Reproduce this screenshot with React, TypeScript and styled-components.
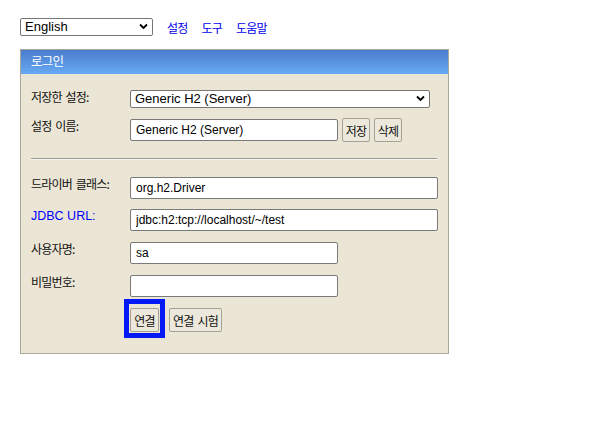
import React from "react";
import styled, { createGlobalStyle } from "styled-components";

const Global = createGlobalStyle`
  html, body { margin: 0; padding: 0; background: #fff; }
  body {
    font-family: "Liberation Sans", Arial, "Noto Sans CJK KR", sans-serif;
    font-size: 12px;
    color: #000;
  }
`;

const Page = styled.div`
  padding: 18px 0 0 20px;
  width: 595px;
`;

const TopBar = styled.div`
  display: flex;
  align-items: center;
  height: 18px;
  gap: 14px;
`;

const SelectWrap = styled.div<{ $w: number }>`
  position: relative;
  width: ${(p) => p.$w}px;
  height: 18px;
`;

const NativeSelect = styled.select`
  appearance: none;
  -webkit-appearance: none;
  box-sizing: border-box;
  width: 100%;
  height: 18px;
  margin: 0;
  padding: 0 20px 0 4px;
  border: 1px solid #767676;
  border-radius: 2px;
  background: #fff;
  font-family: "Liberation Sans", Arial, sans-serif;
  font-size: 13px;
  line-height: 16px;
  color: #000;
  outline: none;
`;

const Chevron = styled.svg`
  position: absolute;
  right: 5px;
  top: 5px;
  width: 9px;
  height: 7px;
  pointer-events: none;
`;

const TopLink = styled.a`
  color: #0000ee;
  text-decoration: none;
  font-family: "Noto Sans CJK KR", sans-serif;
  font-size: 12px;
  letter-spacing: -0.8px;
  line-height: 18px;
  margin-top: 2px;
`;

const Panel = styled.div`
  margin-top: 13px;
  width: 429px;
  box-sizing: border-box;
  border: 1px solid #aca899;
  background: #ebe5d5;
`;

const Header = styled.div`
  height: 24px;
  background: linear-gradient(#4a7ccd, #67aaf3);
  color: #fff;
  font-family: "Noto Sans CJK KR", sans-serif;
  font-size: 12.5px;
  letter-spacing: -0.8px;
  line-height: 22px;
  padding-left: 10px;
`;

const Body = styled.div`
  padding: 16px 0 21px 10px;
  display: flex;
  flex-direction: column;
`;

const Row = styled.div<{ $mt: number; $h: number }>`
  display: flex;
  align-items: flex-start;
  margin-top: ${(p) => p.$mt}px;
  height: ${(p) => p.$h}px;
`;

const Label = styled.div<{ $link?: boolean; $dy?: number }>`
  width: 99px;
  flex: none;
  line-height: 14px;
  margin-top: ${(p) => p.$dy ?? 0}px;
  font-family: ${(p) =>
    p.$link
      ? `"Liberation Sans", Arial, sans-serif`
      : `"Noto Sans CJK KR", sans-serif`};
  font-size: ${(p) => (p.$link ? "12.5px" : "12px")};
  letter-spacing: ${(p) => (p.$link ? "0" : "-0.8px")};
  word-spacing: ${(p) => (p.$link ? "0" : "2px")};
  color: ${(p) => (p.$link ? "#0000ff" : "#111")};
`;

const Controls = styled.div`
  display: flex;
  align-items: center;
  gap: 4px;
  height: 100%;
`;

const TextInput = styled.input<{ $w: number }>`
  box-sizing: border-box;
  width: ${(p) => p.$w}px;
  height: 22px;
  margin: 0;
  padding: 0 5px;
  border: 1px solid #7a7a7a;
  border-radius: 2px;
  background: #fff;
  font-family: "Liberation Sans", Arial, sans-serif;
  font-size: 12px;
  color: #000;
  outline: none;
`;

const Btn = styled.button<{ $w: number }>`
  box-sizing: border-box;
  width: ${(p) => p.$w}px;
  height: 24px;
  margin: 0;
  padding: 0;
  border: 1px solid #a5a195;
  border-radius: 2px;
  background: #ece8dc;
  font-family: "Noto Sans CJK KR", sans-serif;
  font-size: 12px;
  letter-spacing: -0.8px;
  word-spacing: 2px;
  color: #111;
  white-space: nowrap;
`;

const Rule = styled.div`
  margin-top: 16px;
  width: 406px;
  height: 0;
  border-top: 1px solid #9c9a94;
  border-bottom: 1px solid #f6f4ee;
`;

const ButtonRow = styled.div`
  display: flex;
  gap: 10px;
  margin-top: 11px;
  margin-left: 99px;
  height: 24px;
`;

const Highlight = styled.div`
  position: relative;
  display: flex;
  &::after {
    content: "";
    position: absolute;
    left: -6px;
    right: -6px;
    top: -9px;
    bottom: -6px;
    border: 5px solid #0019f5;
    pointer-events: none;
  }
`;

const ChevronIcon = () => (
  <Chevron viewBox="0 0 9 7">
    <path d="M1 1.5 L4.5 5 L8 1.5" fill="none" stroke="#000" strokeWidth="1.8" />
  </Chevron>
);

export default function App() {
  return (
    <>
      <Global />
      <Page>
        <TopBar>
          <SelectWrap $w={133}>
            <NativeSelect defaultValue="en">
              <option value="en">English</option>
            </NativeSelect>
            <ChevronIcon />
          </SelectWrap>
          <TopLink href="#">설정</TopLink>
          <TopLink href="#">도구</TopLink>
          <TopLink href="#">도움말</TopLink>
        </TopBar>
        <Panel>
          <Header>로그인</Header>
          <Body>
            <Row $mt={0} $h={18}>
              <Label>저장한 설정:</Label>
              <SelectWrap $w={300}>
                <NativeSelect defaultValue="g">
                  <option value="g">Generic H2 (Server)</option>
                </NativeSelect>
                <ChevronIcon />
              </SelectWrap>
            </Row>
            <Row $mt={10} $h={24}>
              <Label $dy={1}>설정 이름:</Label>
              <Controls>
                <TextInput $w={208} defaultValue="Generic H2 (Server)" />
                <Btn $w={28}>저장</Btn>
                <Btn $w={28}>삭제</Btn>
              </Controls>
            </Row>
            <Rule />
            <Row $mt={17} $h={22}>
              <Label>드라이버 클래스:</Label>
              <TextInput $w={308} defaultValue="org.h2.Driver" />
            </Row>
            <Row $mt={10} $h={22}>
              <Label $link>JDBC URL:</Label>
              <TextInput $w={308} defaultValue="jdbc:h2:tcp://localhost/~/test" />
            </Row>
            <Row $mt={11} $h={22}>
              <Label>사용자명:</Label>
              <TextInput $w={208} defaultValue="sa" />
            </Row>
            <Row $mt={11} $h={22}>
              <Label>비밀번호:</Label>
              <TextInput $w={208} type="password" defaultValue="" />
            </Row>
            <ButtonRow>
              <Highlight>
                <Btn $w={29}>연결</Btn>
              </Highlight>
              <Btn $w={53}>연결 시험</Btn>
            </ButtonRow>
          </Body>
        </Panel>
      </Page>
    </>
  );
}
